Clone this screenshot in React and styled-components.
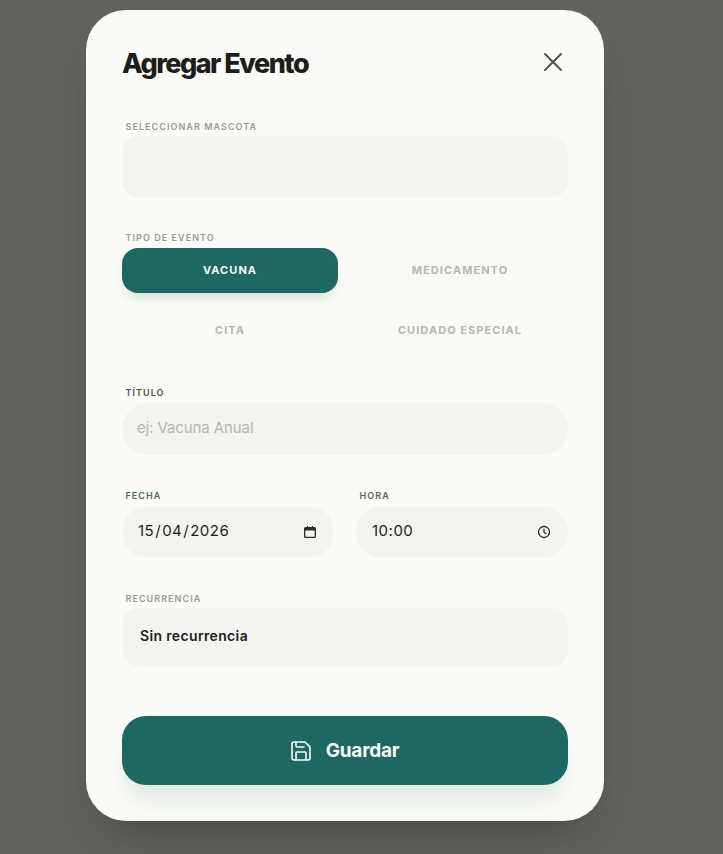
// App.jsx
import React, { useState } from 'react';
import styled, { createGlobalStyle } from 'styled-components';
import { X, Save } from 'lucide-react';

const GlobalStyle = createGlobalStyle`
  html, body {
    margin: 0;
    padding: 0;
    background-color: #63645d;
    overflow: hidden;
  }
  * {
    box-sizing: border-box;
  }
`;

const Backdrop = styled.div`
  min-height: 854px;
  padding: 10px 0 0 86px;
  background-color: #63645d;
  font-family: 'Inter', 'Liberation Sans', sans-serif;
`;

const Card = styled.form`
  width: 518px;
  height: 811px;
  padding: 36px;
  display: flex;
  flex-direction: column;
  background-color: #fafbf6;
  border-radius: 40px;
  box-shadow: 0 25px 50px -12px rgba(0, 0, 0, 0.25);
`;

const Header = styled.div`
  height: 34px;
  display: flex;
  align-items: center;
  justify-content: space-between;
  margin-bottom: 42px;
`;

const Title = styled.h2`
  margin: 0;
  font-size: 27px;
  font-weight: 800;
  letter-spacing: -1.5px;
  color: #1c1e1a;
`;

const CloseButton = styled.button`
  width: 32px;
  height: 32px;
  margin: -2px -1px 0 0;
  padding: 0;
  display: flex;
  align-items: center;
  justify-content: center;
  background: none;
  border: none;
  color: #50524e;
  cursor: pointer;
`;

const Label = styled.label`
  display: block;
  height: 10px;
  margin: 0 0 ${(p) => p.$mb || 4}px 3.5px;
  font-size: 9px;
  line-height: 10px;
  font-weight: 600;
  letter-spacing: 1.05px;
  text-transform: uppercase;
  color: ${(p) => p.$color || '#949c95'};
`;

const Field = styled.div`
  margin-bottom: ${(p) => p.$gap || 0}px;
`;

const PetBox = styled.div`
  height: 61px;
  background-color: #f3f4ef;
  border-radius: 16px;
`;

const TypeGrid = styled.div`
  display: grid;
  grid-template-columns: 216px 216px;
  grid-auto-rows: 45px;
  column-gap: 14px;
  row-gap: 15px;
`;

const TypeButton = styled.button`
  padding: 0 0 2px;
  border: none;
  border-radius: 16px;
  font-family: inherit;
  font-size: 11px;
  font-weight: 700;
  letter-spacing: 1.05px;
  text-transform: uppercase;
  cursor: pointer;
  color: ${(p) => (p.$active ? '#fafbf6' : '#b2b8b2')};
  background-color: ${(p) => (p.$active ? '#1d6863' : '#f9faf5')};
  box-shadow: ${(p) => (p.$active ? '0 8px 12px -4px rgba(30, 105, 100, 0.18)' : 'none')};
`;

const PillInput = styled.div`
  height: 52px;
  padding: 0 16px 3px;
  display: flex;
  align-items: center;
  justify-content: space-between;
  background-color: #f3f4ef;
  border-radius: 26px;
  font-size: 15px;
  letter-spacing: 0.5px;
  color: ${(p) => p.$color || '#1c1e1a'};
`;

const TextInput = styled.input`
  width: 100%;
  padding: 0;
  margin-left: -1px;
  border: none;
  outline: none;
  background: none;
  font-family: inherit;
  font-size: 15px;
  letter-spacing: -0.1px;
  color: #1c1e1a;

  &::placeholder {
    color: #b2b8b2;
    opacity: 1;
  }
`;

const DateSep = styled.span`
  margin: 0 1px;
`;

const TwoColumns = styled.div`
  display: grid;
  grid-template-columns: 212px 212px;
  column-gap: 22px;
  margin-bottom: 36px;
`;

const PickerIcon = styled.svg`
  width: 14px;
  height: 14px;
  margin: 3px 1px 0 0;
  flex-shrink: 0;
  color: #2a2c28;
`;

const SelectBox = styled.div`
  height: 58px;
  padding: 0 18px 3px;
  display: flex;
  align-items: center;
  background-color: #f3f4ef;
  border-radius: 16px;
  font-size: 14px;
  font-weight: 600;
  letter-spacing: 0.35px;
  color: #1c1e1a;
`;

const SaveButton = styled.button`
  height: 69px;
  margin-top: 50px;
  padding: 0 2px 0 0;
  display: flex;
  align-items: center;
  justify-content: center;
  gap: 13px;
  border: none;
  border-radius: 24px;
  background-color: #1d6863;
  color: #fafbf6;
  font-family: inherit;
  font-size: 19px;
  font-weight: 700;
  letter-spacing: -0.2px;
  cursor: pointer;
  box-shadow: 0 20px 25px -5px rgba(30, 105, 100, 0.12);
`;

const eventTypes = ['Vacuna', 'Medicamento', 'Cita', 'Cuidado Especial'];

const CalendarIcon = () => (
  <PickerIcon viewBox="0 0 14 14" fill="currentColor">
    <path d="M4 1h1v1h4V1h1v1h1.500A1.500 1.500 0 0 1 13 3.500v8a1.500 1.500 0 0 1-1.500 1.500h-9A1.500 1.500 0 0 1 1 11.500v-8A1.500 1.500 0 0 1 2.500 2H4V1Zm-1.700 4.500v6c0 .2.100.300.300.300h8.800c.2 0 .300-.1.300-.300v-6H2.300Z" />
  </PickerIcon>
);

const ClockIcon = () => (
  <PickerIcon viewBox="0 0 14 14" fill="none" stroke="currentColor" strokeWidth="1.300">
    <circle cx="7" cy="7" r="5.500" />
    <path d="M7 3.800V7.300l2.400 1.400" />
  </PickerIcon>
);

const App = () => {
  const [active, setActive] = useState('Vacuna');

  return (
    <Backdrop>
      <GlobalStyle />
      <Card onSubmit={(e) => e.preventDefault()}>
        <Header>
          <Title>Agregar Evento</Title>
          <CloseButton type="button" aria-label="Cerrar">
            <X size={32} strokeWidth={1.4} />
          </CloseButton>
        </Header>

        <Field $gap={36}>
          <Label $mb={4}>Seleccionar mascota</Label>
          <PetBox />
        </Field>

        <Field $gap={35}>
          <Label $mb={5}>Tipo de evento</Label>
          <TypeGrid>
            {eventTypes.map((type) => (
              <TypeButton
                key={type}
                type="button"
                $active={active === type}
                onClick={() => setActive(type)}
              >
                {type}
              </TypeButton>
            ))}
          </TypeGrid>
        </Field>

        <Field $gap={36}>
          <Label $color="#4b524d" $mb={5}>Título</Label>
          <PillInput>
            <TextInput placeholder="ej: Vacuna Anual" />
          </PillInput>
        </Field>

        <TwoColumns>
          <div>
            <Label $color="#56665f" $mb={5}>Fecha</Label>
            <PillInput>
              <span>15<DateSep>/</DateSep>04<DateSep>/</DateSep>2026</span>
              <CalendarIcon />
            </PillInput>
          </div>
          <div>
            <Label $color="#56665f" $mb={5}>Hora</Label>
            <PillInput>
              10:00
              <ClockIcon />
            </PillInput>
          </div>
        </TwoColumns>

        <Field>
          <Label>Recurrencia</Label>
          <SelectBox>Sin recurrencia</SelectBox>
        </Field>

        <SaveButton type="submit">
          <Save size={24} strokeWidth={1.6} />
          Guardar
        </SaveButton>
      </Card>
    </Backdrop>
  );
};

export default App;
